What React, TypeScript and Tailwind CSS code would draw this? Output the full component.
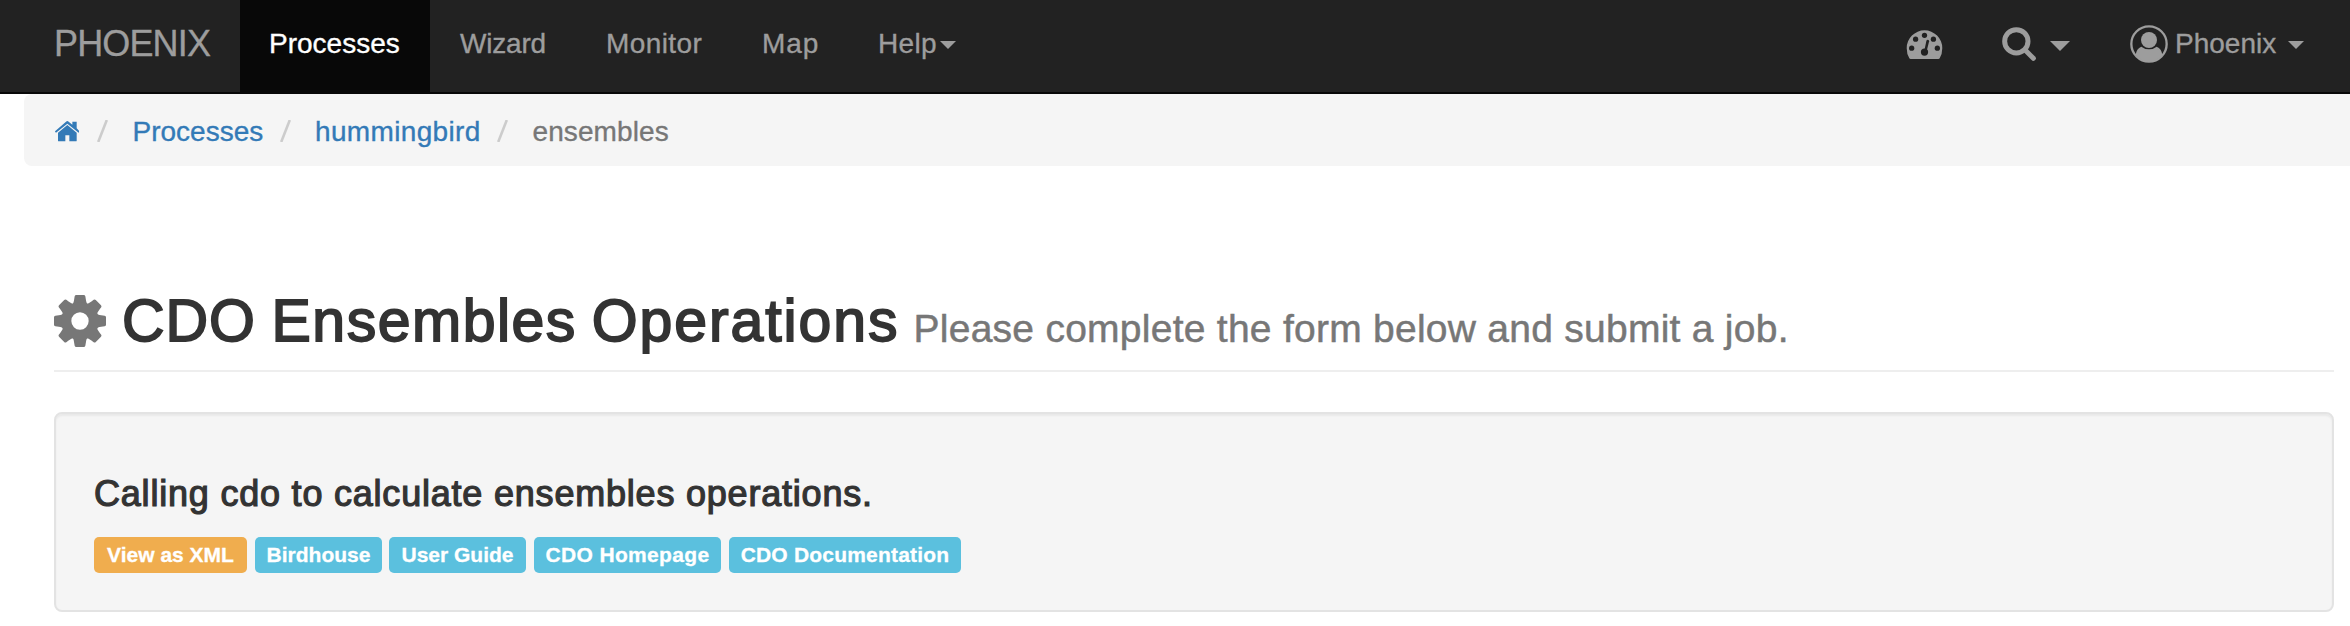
import React from 'react';

const navText = 'text-[28px] leading-[40px] whitespace-nowrap [-webkit-text-stroke:0.35px_currentColor]';

function Caret({ className }: { className: string }) {
  return (
    <svg viewBox="0 0 16 8" preserveAspectRatio="none" className={`shrink-0 ${className}`} fill="currentColor">
      <path d="M0 0H16L8 8Z" />
    </svg>
  );
}

function HomeIcon() {
  return (
    <svg viewBox="0 0 74 62" className="h-[20.7px] w-[24.7px] shrink-0" fill="currentColor">
      <path d="M37 0Q39 0 41 2L52 11V2H65V22L73 30Q75 32 73 33L71 35Q70 35 69 34L37 8L5 34Q4 35 3 35L1 33Q-1 32 1 30L33 2Q35 0 37 0Z" />
      <path d="M37 12L65 35V59Q65 61 63 61H43V43H31V61H11Q9 61 9 59V35Z" />
    </svg>
  );
}

function DashboardIcon() {
  return (
    <svg viewBox="0 0 110 88" className="h-[29px] w-[37px] shrink-0">
      <path d="M9 86Q1 73 1 55A54 54 0 0 1 109 55Q109 73 101 86Q100 88 97 88H13Q10 88 9 86Z" fill="currentColor" />
      <g fill="#222222">
        <circle cx="16" cy="55" r="8" />
        <circle cx="28" cy="28" r="8" />
        <circle cx="55" cy="16" r="8" />
        <circle cx="82" cy="28" r="8" />
        <circle cx="94" cy="55" r="8" />
        <circle cx="55" cy="67" r="11" />
        <path d="M61 32Q63 28 67 30Q69 31 69 34L62 62L55 60Z" />
      </g>
    </svg>
  );
}

function SearchIcon() {
  return (
    <svg viewBox="0 0 102 102" className="h-[34px] w-[34px] shrink-0" fill="none" stroke="currentColor">
      <circle cx="43" cy="43" r="35" strokeWidth="15" />
      <path d="M70 70L94 94" strokeWidth="15" strokeLinecap="round" />
    </svg>
  );
}

function UserIcon() {
  return (
    <svg viewBox="0 0 114 114" className="h-[38px] w-[38px] shrink-0">
      <circle cx="57" cy="57" r="53" fill="none" stroke="currentColor" strokeWidth="7" />
      <circle cx="57" cy="45" r="24" fill="currentColor" />
      <path d="M17 90Q19 71 34 65Q44 73 57 73Q70 73 80 65Q95 71 97 90Q80 110 57 110Q34 110 17 90Z" fill="currentColor" />
    </svg>
  );
}

function CogIcon() {
  const teeth = [0, 45, 90, 135, 180, 225, 270, 315];
  return (
    <svg viewBox="-78 -78 156 156" className="h-[52px] w-[52px] shrink-0" fill="#777777">
      {teeth.map((a) => (
        <path key={a} transform={`rotate(${a})`} d="M-22 -48Q-18 -56 -16 -74Q-15 -78 -11 -78H11Q15 -78 16 -74Q18 -56 22 -48Z" />
      ))}
      <path fillRule="evenodd" d="M0 -57A57 57 0 1 1 0 57A57 57 0 1 1 0 -57ZM0 -26A26 26 0 1 0 0 26A26 26 0 1 0 0 -26Z" />
    </svg>
  );
}

function Slash() {
  return (
    <svg viewBox="0 0 11 22" className="h-[22px] w-[11px] shrink-0" stroke="#cccccc" strokeWidth="2.6">
      <path d="M1.2 22L9.8 0" />
    </svg>
  );
}

const labels = [
  { text: 'View as XML', cls: 'bg-[#f0ad4e] w-[153px]' },
  { text: 'Birdhouse', cls: 'bg-[#5bc0de] w-[127px] ml-2' },
  { text: 'User Guide', cls: 'bg-[#5bc0de] w-[137px] ml-[7px]' },
  { text: 'CDO Homepage', cls: 'bg-[#5bc0de] w-[187px] ml-2 tracking-[0.33px]' },
  { text: 'CDO Documentation', cls: 'bg-[#5bc0de] w-[232px] ml-2 tracking-[0.2px]' },
];

export default function App() {
  return (
    <div className="h-[626px] w-[2350px] overflow-hidden bg-white font-['Liberation_Sans',Arial,sans-serif] text-[#333333]">
      <nav className="flex h-[94px] border-b-2 border-[#080808] bg-[#222222] text-[#9d9d9d]">
        <a className="w-60 shrink-0 pt-6 pl-[54px] text-[36px] leading-[40px] tracking-[-0.85px] [-webkit-text-stroke:0.35px_currentColor]">PHOENIX</a>
        <a className={`w-[190px] bg-[#080808] pt-6 pl-[29px] text-white ${navText}`}>Processes</a>
        <a className={`w-[145px] pt-6 pl-[30px] tracking-[-0.2px] ${navText}`}>Wizard</a>
        <a className={`w-[156px] pt-6 pl-[31px] tracking-[0.4px] ${navText}`}>Monitor</a>
        <a className={`w-[117px] pt-6 pl-[31px] tracking-[0.9px] ${navText}`}>Map</a>
        <a className={`flex pt-6 pl-[30px] ${navText}`}>
          <span className="w-[62px] tracking-[0.3px]">Help</span>
          <Caret className="mt-[17px] h-2 w-4" />
        </a>
        <div className="ml-auto flex items-start pr-[46px]">
          <a className="pt-[30px]"><DashboardIcon /></a>
          <a className="ml-[59px] flex pt-[27px]">
            <SearchIcon />
            <Caret className="mt-[14px] ml-[14px] h-[10px] w-5" />
          </a>
          <a className="ml-[60px] flex">
            <span className="pt-[25px]"><UserIcon /></span>
            <span className={`ml-[7px] w-[113px] pt-6 ${navText}`}>Phoenix</span>
            <Caret className="mt-[41px] h-2 w-4" />
          </a>
        </div>
      </nav>

      <ol className={`ml-6 flex h-[72px] rounded-l-lg bg-[#f5f5f5] pl-[30.5px] text-[#337ab7] ${navText}`}>
        <li className="w-[42.5px] pt-[27px]"><HomeIcon /></li>
        <li className="flex">
          <span className="w-[35.5px] pt-[26px]"><Slash /></span>
          <a className="w-[147px] pt-[18px]">Processes</a>
        </li>
        <li className="flex">
          <span className="w-[35.5px] pt-[26px]"><Slash /></span>
          <a className="w-[182px] pt-[18px] tracking-[0.35px]">hummingbird</a>
        </li>
        <li className="flex text-[#777777]">
          <span className="w-[35.5px] pt-[26px]"><Slash /></span>
          <span className="pt-[18px] tracking-[0.1px] [-webkit-text-stroke-color:#777777]">ensembles</span>
        </li>
      </ol>

      <main className="pr-4 pl-[54px]">
        <header className="flex h-[206px] border-b-2 border-[#eeeeee] pt-[129px]">
          <CogIcon />
          <h1 className="-mt-[7px] ml-[16px] flex text-[59px] leading-[66px] whitespace-nowrap [-webkit-text-stroke:1.8px_#333333]">
            <span className="w-[149.5px] tracking-[0.9px]">CDO</span>
            <span className="w-[320.3px] tracking-[1.5px]">Ensembles</span>
            <span className="w-[321.7px] tracking-[1.9px]">Operations</span>
          </h1>
          <small className="text-[39px] leading-[68px] tracking-[0.26px] whitespace-nowrap text-[#777777] [-webkit-text-stroke:0.5px_#777777]">
            Please complete the form below and submit a job.
          </small>
        </header>

        <section className="mt-10 h-[200px] rounded-lg border-2 border-[#e3e3e3] bg-[#f5f5f5] pt-[60px] pl-[38px] shadow-[inset_0_2px_2px_rgba(0,0,0,0.05)]">
          <h4 className="text-[36px] leading-[40px] tracking-[0.79px] whitespace-nowrap [-webkit-text-stroke:1.2px_#333333]">
            Calling cdo to calculate ensembles operations.
          </h4>
          <div className="mt-[23px] flex">
            {labels.map((l) => (
              <a key={l.text} className={`h-9 rounded-[5px] pt-[6px] text-center text-[21px] leading-[24px] font-bold whitespace-nowrap text-white [-webkit-text-stroke:0.3px_white] ${l.cls}`}>
                {l.text}
              </a>
            ))}
          </div>
        </section>
      </main>
    </div>
  );
}
